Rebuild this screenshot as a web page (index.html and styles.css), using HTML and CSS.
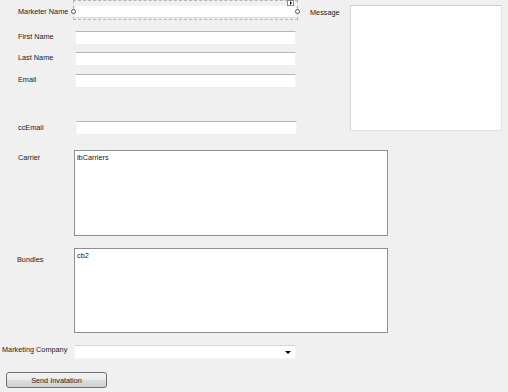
FILE: index.html
```html
<!DOCTYPE html>
<html lang="en">
<head>
  <meta charset="UTF-8" />
  <meta name="viewport" content="width=device-width, initial-scale=1.0"/>
  <title>Send Invitation</title>
  <link rel="stylesheet" href="styles.css">
</head>
<body>
  <div class="form">
    <div class="top">
      <div class="fields">
        <div class="row row-marketer">
          <label>Marketer Name</label>
          <div class="selected">
            <input type="text" class="textbox" />
            <span class="handle handle-left"></span>
            <span class="handle handle-right"></span>
            <span class="smart-tag"></span>
          </div>
        </div>
        <div class="row row-first">
          <label>First Name</label>
          <input type="text" class="textbox" />
        </div>
        <div class="row row-last">
          <label>Last Name</label>
          <input type="text" class="textbox" />
        </div>
        <div class="row row-email">
          <label>Email</label>
          <input type="text" class="textbox" />
        </div>
        <div class="row row-cc">
          <label>ccEmail</label>
          <input type="text" class="textbox" />
        </div>
      </div>
      <div class="message">
        <label>Message</label>
        <textarea class="message-box"></textarea>
      </div>
    </div>

    <div class="row row-list row-carrier">
      <label>Carrier</label>
      <div class="listbox">lbCarriers</div>
    </div>
    <div class="row row-list row-bundles">
      <label>Bundles</label>
      <div class="listbox">cb2</div>
    </div>

    <div class="row row-combo">
      <label>Marketing Company</label>
      <div class="combobox"><span class="arrow"></span></div>
    </div>

    <button type="button" class="send">Send Invatation</button>
  </div>
</body>
</html>
```

FILE: styles.css
```css
body {
  margin: 0;
  background-color: #f0f0f0;
  font-family: "Liberation Sans", Arial, sans-serif;
  font-size: 7.3px;
  color: #1a1a1a;
}

.form {
  width: 508px;
}

.top {
  display: flex;
  align-items: flex-start;
}

.fields {
  width: 300px;
}

.row {
  display: flex;
  align-items: flex-start;
}

.row label {
  box-sizing: border-box;
  width: 75px;
  padding-left: 18px;
  line-height: 10px;
  flex-shrink: 0;
}

.textbox {
  box-sizing: border-box;
  width: 221px;
  height: 14px;
  margin: 0;
  padding: 0 2px;
  border: 1px solid #f3f3f3;
  border-top-color: #b4b6bc;
  border-bottom-color: #eceef2;
  background-color: #fff;
  font: inherit;
  outline: none;
}

/* selected control in the designer */
.row-marketer label {
  width: 73px;
  padding-top: 7px;
}

.selected {
  position: relative;
  box-sizing: border-box;
  width: 225px;
  height: 20px;
  border: 1px dashed #b4b4b4;
}

.selected .textbox {
  margin: 4px 0 0 1px;
  height: 13px;
  border-color: #f4f4f4;
  border-bottom-color: #d8d8d8;
}

.handle {
  position: absolute;
  top: 8px;
  width: 5px;
  height: 5px;
  box-sizing: border-box;
  border: 1px solid #555;
  border-radius: 50%;
  background-color: #fff;
}

.handle-left {
  left: -3px;
}

.handle-right {
  right: -3px;
}

.smart-tag {
  position: absolute;
  top: -1px;
  right: 3px;
  width: 7px;
  height: 6px;
  box-sizing: border-box;
  border: 1px solid #8a8a8a;
  background-color: #fff;
}

.smart-tag::after {
  content: "";
  position: absolute;
  left: 2px;
  top: 0;
  border-left: 2px solid #000;
  border-top: 2px solid transparent;
  border-bottom: 2px solid transparent;
}

.row-first {
  margin-top: 11px;
}

.row-last {
  margin-top: 7px;
}

.row-email {
  margin-top: 8px;
}

.row-cc {
  margin-top: 33px;
}

.row-cc .textbox {
  margin-left: 1px;
}

.row-first label,
.row-last label,
.row-email label {
  padding-top: 1px;
}

.row-cc label {
  padding-top: 2px;
}

.message {
  display: flex;
  align-items: flex-start;
  margin-left: 10px;
}

.message label {
  width: 40px;
  padding-top: 8px;
  line-height: 10px;
}

.message-box {
  box-sizing: border-box;
  width: 152px;
  height: 126px;
  margin: 5px 0 0;
  padding: 0;
  border: 1px solid #e2e2e2;
  border-top-color: #cdcdcd;
  border-left-color: #d6d6d6;
  background-color: #fff;
  resize: none;
  outline: none;
}

/* list boxes */
.row-list label {
  width: 74px;
}

.listbox {
  box-sizing: border-box;
  width: 314px;
  padding: 2px 2px;
  border: 1px solid #8c8f96;
  background-color: #fff;
  line-height: 10px;
}

.row-carrier {
  margin-top: 15px;
}

.row-carrier label {
  padding-top: 3px;
}

.row-carrier .listbox {
  height: 86px;
}

.row-bundles {
  margin-top: 12px;
}

.row-bundles label {
  padding-top: 7px;
  padding-left: 17px;
}

.row-bundles .listbox {
  height: 85px;
}

/* combo box */
.row-combo {
  margin-top: 12px;
}

.row-combo label {
  width: 74px;
  padding-left: 2px;
  padding-top: 0;
}

.combobox {
  position: relative;
  box-sizing: border-box;
  width: 222px;
  height: 14px;
  border: 1px solid #f4f4f4;
  border-top-color: #d4d4d4;
  background-color: #fff;
}

.arrow {
  position: absolute;
  right: 4px;
  top: 5px;
  border-top: 3px solid #000;
  border-left: 3px solid transparent;
  border-right: 3px solid transparent;
}

.send {
  display: block;
  box-sizing: border-box;
  width: 101px;
  height: 16px;
  margin: 13px 0 0 6px;
  padding: 0;
  border: 1px solid #707070;
  border-radius: 3px;
  background: linear-gradient(#f2f2f2 0%, #ebebeb 50%, #dddddd 51%, #cfcfcf 100%);
  font: inherit;
  color: #1a1a1a;
}
```
